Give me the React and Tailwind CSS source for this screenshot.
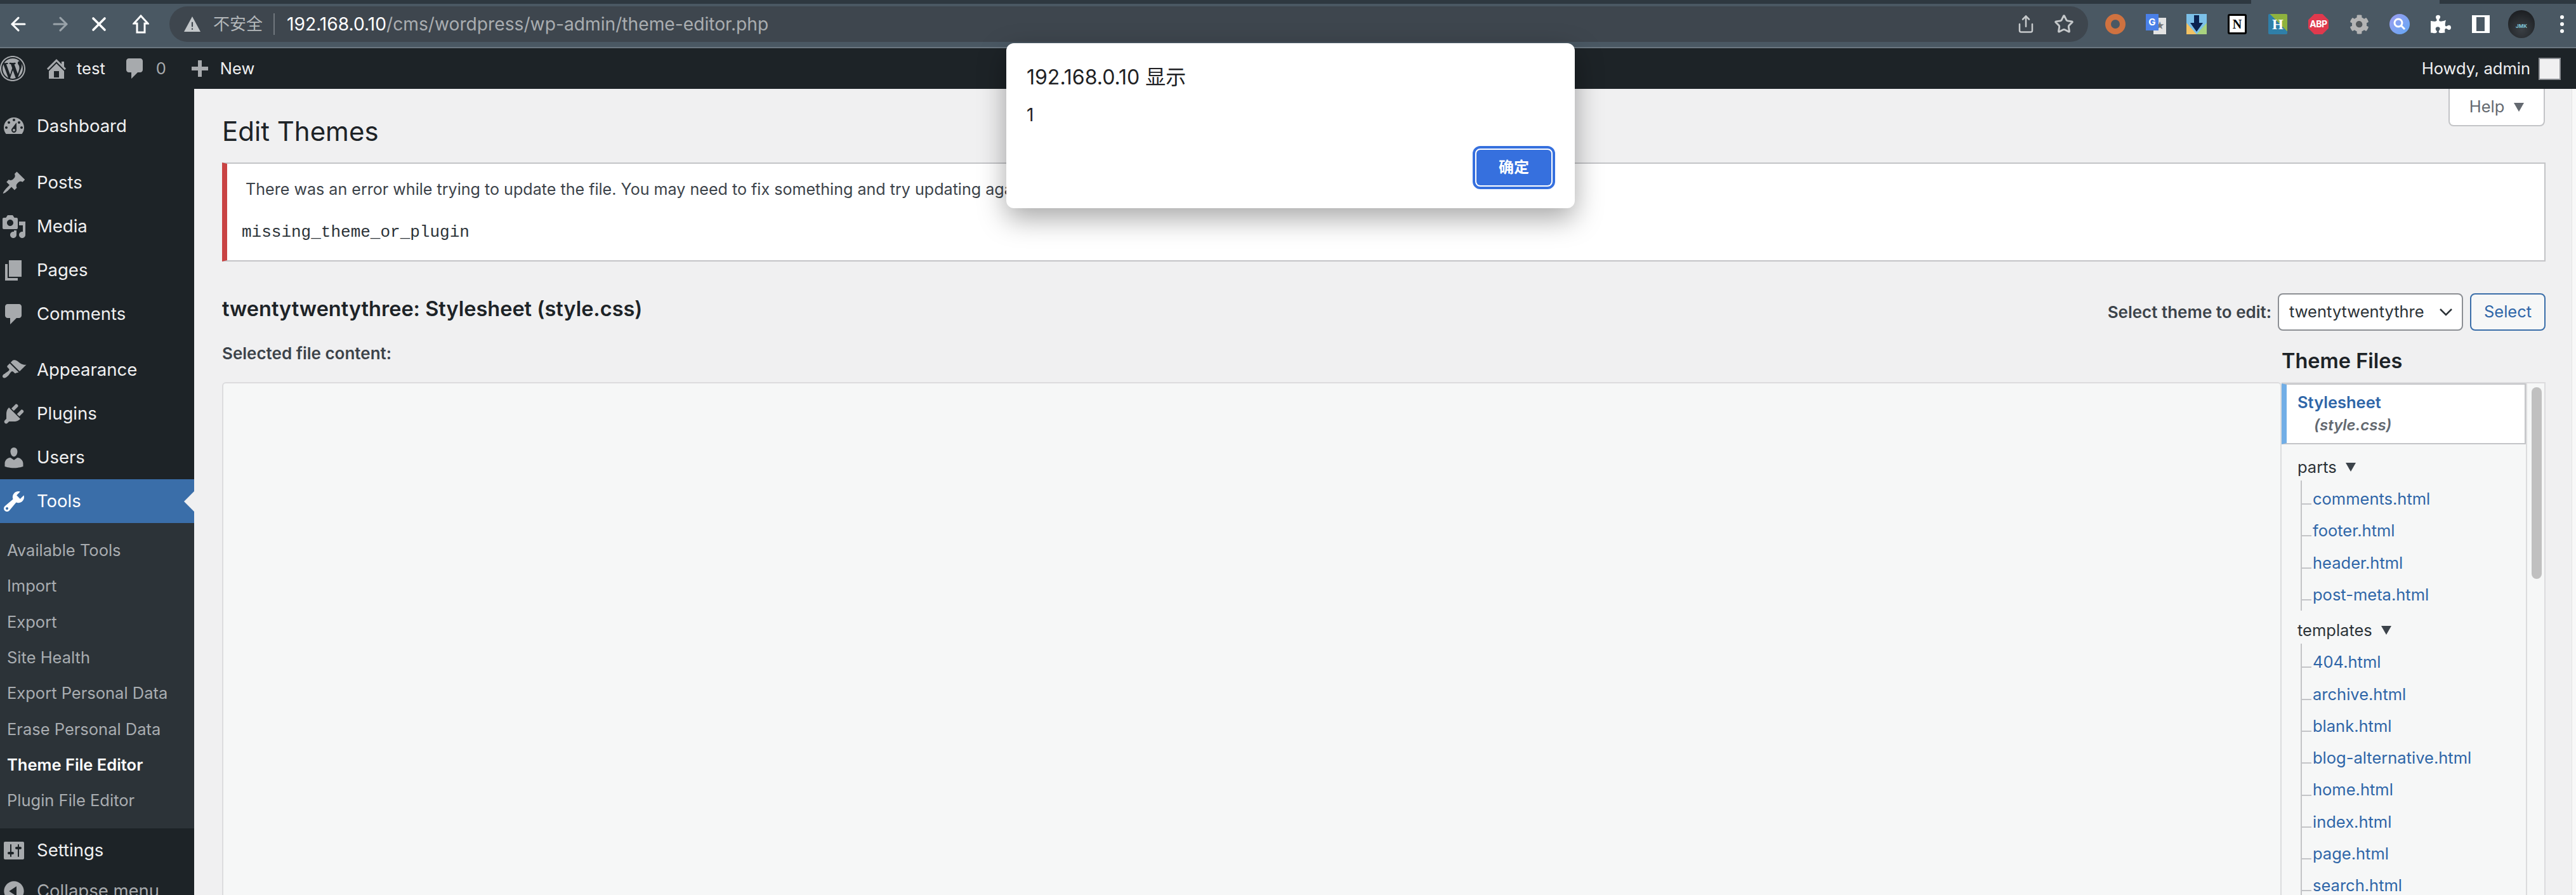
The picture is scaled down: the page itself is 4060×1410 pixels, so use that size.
import { ArrowLeft, ArrowRight, X, Share, Star } from 'lucide-react';
import { FaPuzzlePiece, FaCog } from 'react-icons/fa';

const dash = {
  wp: 'M20 10c0-5.52-4.48-10-10-10S0 4.48 0 10s4.48 10 10 10 10-4.48 10-10zM10 1.01c4.96 0 8.99 4.03 8.99 8.99s-4.03 8.99-8.99 8.99S1.01 14.96 1.01 10 5.04 1.01 10 1.01zM8.01 14.82L4.96 6.61c.49-.03 1.05-.08 1.05-.08.43-.05.38-1.01-.06-.99 0 0-1.29.1-2.13.1-.15 0-.33 0-.52-.01 1.44-2.17 3.9-3.6 6.7-3.6 2.09 0 3.99.79 5.41 2.09-.6-.08-1.45.35-1.45 1.42 0 .66.38 1.22.79 1.88.31.54.5 1.22.5 2.21 0 1.34-1.27 4.48-1.27 4.48l-2.71-7.5c.48-.03.75-.16.75-.16.43-.05.38-1.1-.05-1.08 0 0-1.3.11-2.14.11-.78 0-2.11-.11-2.11-.11-.43-.02-.48 1.06-.05 1.08l.84.08 1.12 3.04zm6.02 2.15L16.64 10s.67-1.69.39-3.81c.63 1.14.94 2.42.94 3.81 0 2.96-1.56 5.58-3.94 6.97zM2.68 6.77L6.5 17.25c-2.67-1.3-4.47-4.08-4.47-7.25 0-1.16.2-2.23.65-3.23zm7.45 4.53l2.29 6.25c-.75.27-1.57.42-2.42.42-.72 0-1.41-.11-2.06-.3z',
  home: 'M16 8.5l1.53 1.53-1.06 1.06L10 4.62l-6.47 6.47-1.06-1.06L10 2.5l4 4v-2h2v4zm-6-2.46l6 5.99V18H4v-5.97zM12 17v-5H8v5h4z',
  dashboard: 'M3.76 16h12.48c1.1-1.37 1.76-3.11 1.76-5 0-4.42-3.58-8-8-8s-8 3.58-8 8c0 1.89.66 3.63 1.76 5zM10 4c.55 0 1 .45 1 1s-.45 1-1 1-1-.45-1-1 .45-1 1-1zM6 6c.55 0 1 .45 1 1s-.45 1-1 1-1-.45-1-1 .45-1 1-1zm8 0c.55 0 1 .45 1 1s-.45 1-1 1-1-.45-1-1 .45-1 1-1zm-5.37 5.55L12 7v6c0 1.1-.9 2-2 2s-2-.9-2-2c0-.57.24-1.08.63-1.45zM4 10c.55 0 1 .45 1 1s-.45 1-1 1-1-.45-1-1 .45-1 1-1zm12 0c.55 0 1 .45 1 1s-.45 1-1 1-1-.45-1-1 .45-1 1-1zm-5 3c0-.55-.45-1-1-1s-1 .45-1 1 .45 1 1 1 1-.45 1-1z',
  posts: 'M10.44 3.02l1.82-1.82 6.36 6.35-1.83 1.82c-1.05-.68-2.48-.57-3.41.36l-.75.75c-.92.93-1.04 2.35-.35 3.41l-1.83 1.82-2.41-2.41-2.8 2.79c-.42.42-3.38 2.71-3.8 2.29s1.86-3.39 2.28-3.81l2.79-2.79L4.1 9.36l1.83-1.82c1.05.69 2.48.57 3.4-.36l.75-.75c.93-.92 1.05-2.35.36-3.41z',
  media: 'M13 11V4c0-.55-.45-1-1-1h-1.67L9 1H5L3.67 3H2c-.55 0-1 .45-1 1v7c0 .55.45 1 1 1h10c.55 0 1-.45 1-1zM7 4.5c1.38 0 2.5 1.12 2.5 2.5S8.38 9.5 7 9.5 4.5 8.38 4.5 7 5.62 4.5 7 4.5zM14 6h5v10.5c0 1.38-1.12 2.5-2.5 2.5S14 17.88 14 16.5s1.12-2.5 2.5-2.5c.17 0 .34.02.5.05V9h-3V6zm-4 8.05V13h2v3.5c0 1.38-1.12 2.5-2.5 2.5S7 17.88 7 16.5 8.12 14 9.5 14c.17 0 .34.02.5.05z',
  pages: 'M6 15V2h10v13H6zm-1 1h8v2H3V5h2v11z',
  comments: 'M5 2h9c1.1 0 2 .9 2 2v7c0 1.1-.9 2-2 2h-2l-5 5v-5H5c-1.1 0-2-.9-2-2V4c0-1.1.9-2 2-2z',
  appearance: 'M14.48 11.06L7.41 3.99l1.5-1.5c.5-.56 2.3-.47 3.51.32 1.21.8 1.43 1.28 2.91 2.1 1.18.64 2.45 1.26 4.45.85zm-.71.71L6.7 4.7 4.93 6.47c-.39.39-.39 1.02 0 1.41l1.06 1.06c.39.39.39 1.03 0 1.42-.6.6-1.43 1.11-2.21 1.69-.35.26-.7.53-1.01.84C1.43 13.23.4 14.84 1.4 15.84c.99 1 2.64-.04 3.98-1.38.31-.31.58-.66.84-1.01.58-.78 1.09-1.61 1.69-2.21.39-.39 1.02-.39 1.41 0l1.06 1.06c.39.39 1.02.39 1.41 0z',
  plugins: 'M13.11 4.36L9.87 7.6 8 5.73l3.24-3.24c.35-.34 1.05-.2 1.56.32.52.51.66 1.21.31 1.55zm-8 1.77l.91-1.12 9.01 9.01-1.19.84c-.71.71-2.63 1.16-3.82 1.16H6.14L4.9 17.26c-.59.59-1.54.59-2.12 0-.59-.58-.59-1.53 0-2.12l1.24-1.24v-3.88c0-1.13.4-3.19 1.09-3.89zm7.26 3.97l3.24-3.24c.34-.35 1.04-.21 1.55.31.52.51.66 1.21.31 1.55l-3.24 3.25z',
  users: 'M10 9.25c-2.27 0-2.73-3.44-2.73-3.44C7 4.02 7.82 2 9.97 2c2.16 0 2.98 2.02 2.71 3.81 0 0-.41 3.44-2.68 3.44zm0 2.57L12.72 10c2.39 0 4.52 2.33 4.52 4.53v2.49s-3.65 1.13-7.24 1.13c-3.65 0-7.24-1.13-7.24-1.13v-2.49c0-2.25 1.94-4.48 4.47-4.48z',
  tools: 'M16.68 9.77c-1.34 1.34-3.3 1.67-4.95.99l-5.41 6.52c-.99.99-2.59.99-3.58 0s-.99-2.59 0-3.57l6.52-5.42c-.68-1.65-.35-3.61.99-4.95 1.28-1.28 3.12-1.62 4.72-1.06l-2.89 2.89 2.82 2.82 2.86-2.87c.53 1.58.18 3.39-1.08 4.65zM3.81 16.21c.4.39 1.04.39 1.43 0 .4-.4.4-1.04 0-1.43-.39-.4-1.03-.4-1.43 0-.39.39-.39 1.03 0 1.43z',
  settings: 'M18 16V4c0-.55-.45-1-1-1H3c-.55 0-1 .45-1 1v12c0 .55.45 1 1 1h14c.55 0 1-.45 1-1zM8 11h1c.55 0 1 .45 1 1s-.45 1-1 1H8v1.5c0 .28-.22.5-.5.5s-.5-.22-.5-.5V13H6c-.55 0-1-.45-1-1s.45-1 1-1h1V5.5c0-.28.22-.5.5-.5s.5.22.5.5V11zm5-2h-1c-.55 0-1-.45-1-1s.45-1 1-1h1V5.5c0-.28.22-.5.5-.5s.5.22.5.5V7h1c.55 0 1 .45 1 1s-.45 1-1 1h-1v5.5c0 .28-.22.5-.5.5s-.5-.22-.5-.5V9z',
  collapse: 'M10 2.16c4.33 0 7.84 3.51 7.84 7.84s-3.51 7.84-7.84 7.84S2.16 14.33 2.16 10 5.71 2.16 10 2.16zm2 11.72V6.12L6.18 9.97z',
};

function Dash({ name, className }) {
  return (
    <svg viewBox="0 0 20 20" fill="currentColor" className={className}>
      <path d={dash[name]} />
    </svg>
  );
}

function Caret({ className }) {
  return (
    <svg viewBox="0 0 16 16" fill="currentColor" className={className}>
      <path d="M0 1h16L8 15z" />
    </svg>
  );
}

function ExtensionIcons() {
  return (
    <div className="flex items-center gap-[32px] ml-[27px]">
      {/* orange ring */}
      <div className="w-[32px] h-[32px] rounded-full border-[9px] border-[#cf7240]" />
      {/* translate */}
      <div className="w-[32px] h-[32px] relative">
        <div className="absolute right-0 bottom-0 w-[20px] h-[26px] bg-[#e3e3e3] text-[#777] text-[15px] leading-[26px] text-center">★</div>
        <div className="absolute left-0 top-0 w-[20px] h-[26px] bg-[#4a80e8] text-white text-[15px] font-bold leading-[26px] text-center">G</div>
      </div>
      {/* download */}
      <svg viewBox="0 0 32 32" className="w-[32px] h-[32px]">
        <rect width="32" height="32" fill="#7cc0e8" />
        <path d="M0 14L16 32H0z" fill="#f2c263" />
        <path d="M32 14L16 32h16z" fill="#a8d27f" />
        <path d="M12 2h8v12h6L16 28 6 14h6z" fill="#0c2350" />
      </svg>
      {/* notion */}
      <div className="w-[32px] flex justify-center">
        <div className="w-[30px] h-[32px] bg-white border-[3px] border-black rounded-[3px] flex items-center justify-center font-['Liberation_Serif'] font-bold text-[20px] text-black leading-none">N</div>
      </div>
      {/* H */}
      <div className="w-[32px] flex justify-center">
        <div className="w-[30px] h-[32px] rounded-[2px] bg-[linear-gradient(45deg,#2f7fa8_55%,#8fb23e_55%)] flex items-center justify-center font-['Liberation_Serif'] font-bold text-[23px] text-white leading-none">H</div>
      </div>
      {/* ABP */}
      <div className="w-[32px] h-[32px] bg-[#e0394d] [clip-path:polygon(30%_0,70%_0,100%_30%,100%_70%,70%_100%,30%_100%,0_70%,0_30%)] flex items-center justify-center text-white font-bold text-[14px] tracking-[-0.5px] leading-none">ABP</div>
      {/* gear */}
      <div className="relative w-[32px] h-[32px] flex items-center justify-center">
        <FaCog className="w-[31px] h-[31px] text-[#b4b4b4]" />
        <div className="absolute w-[10px] h-[10px] rounded-full bg-[#55595c]" />
      </div>
      {/* blue search */}
      <svg viewBox="0 0 32 32" className="w-[32px] h-[32px]">
        <defs>
          <linearGradient id="q" x1="0" y1="0" x2="1" y2="1">
            <stop offset="0" stopColor="#9d9df0" />
            <stop offset="1" stopColor="#63a8f5" />
          </linearGradient>
        </defs>
        <circle cx="16" cy="16" r="16" fill="url(#q)" />
        <circle cx="14" cy="14" r="6" fill="none" stroke="#fff" strokeWidth="3" />
        <path d="M18 18l6 6" stroke="#fff" strokeWidth="3" />
      </svg>
    </div>
  );
}

function BrowserBar() {
  return (
    <div className="h-[76px] shrink-0 bg-[#4a5863] border-b-2 border-[#6a7680]">
      <div className="h-[6px] flex">
        <div className="w-[3548px] bg-[#2e3840]" />
        <div className="w-[297px]" />
        <div className="flex-1 bg-[#2e3840]" />
      </div>
      <div className="flex items-start">
        <div className="h-[56px] mt-[4px] flex items-center w-[267px] shrink-0 text-white">
          <ArrowLeft className="w-[34px] h-[34px] ml-[12px]" strokeWidth={2.2} />
          <ArrowRight className="w-[34px] h-[34px] ml-[32px] text-[#9aa3aa]" strokeWidth={2.2} />
          <X className="w-[36px] h-[36px] ml-[26px]" strokeWidth={2.4} />
          <svg viewBox="0 0 26 30" fill="none" stroke="currentColor" strokeWidth="3" className="w-[26px] h-[30px] ml-[35px]">
            <path d="M13 2L2 14h5v14h12V14h5z" />
          </svg>
        </div>
        <div className="h-[56px] mt-[4px] w-[3024px] rounded-[28px] bg-[#3e464e] flex items-center">
          <svg viewBox="0 0 24 24" className="w-[26px] h-[26px] ml-[23px]" fill="#c3c7ca">
            <path d="M12 1L24 23H0z" />
            <path d="M11 9h2v7h-2zM11 18h2v2h-2z" fill="#3e464e" />
          </svg>
          <span className="ml-[20px] text-[26px] leading-none text-[#b4b8bb]">不安全</span>
          <span className="ml-[17px] w-[2px] h-[34px] bg-[#70777d]" />
          <span className="ml-[19px] text-[28.2px] leading-none text-[#a9adb0] whitespace-nowrap">
            <span className="text-white">192.168.0.10</span>/cms/wordpress/wp-admin/theme-editor.php
          </span>
          <Share className="w-[30px] h-[32px] ml-auto text-[#c6c9cb]" strokeWidth={2} />
          <Star className="w-[32px] h-[32px] ml-[29px] mr-[22px] text-[#c6c9cb]" strokeWidth={2.2} />
        </div>
        <div className="h-[56px] mt-[4px] flex items-center flex-1">
          <ExtensionIcons />
          <FaPuzzlePiece className="w-[32px] h-[32px] ml-[33px] text-white" />
          <div className="w-[28px] h-[28px] ml-[33px] border-y-[3px] border-l-[7px] border-r-[8px] border-white" />
          <div className="w-[42px] h-[44px] ml-[29px] rounded-full bg-[radial-gradient(circle_at_50%_70%,#3a3f44,#15171a)] flex items-center justify-center pt-[6px] text-[8px] font-bold leading-none text-[#7fc4d8]">JMK</div>
          <div className="ml-[40px] flex flex-col gap-[5px]">
            <span className="w-[6px] h-[6px] rounded-full bg-white" />
            <span className="w-[6px] h-[6px] rounded-full bg-white" />
            <span className="w-[6px] h-[6px] rounded-full bg-white" />
          </div>
        </div>
      </div>
    </div>
  );
}

function AdminBar() {
  return (
    <div className="h-[64px] shrink-0 bg-[#1d2327] flex items-center text-[25.5px] text-[#f0f0f1] pr-[24px]">
      <Dash name="wp" className="w-[40px] h-[40px] text-[#a7aaad]" />
      <Dash name="home" className="w-[40px] h-[40px] ml-[29px] text-[#a7aaad]" />
      <span className="ml-[12px]">test</span>
      <Dash name="comments" className="w-[40px] h-[40px] ml-[27px] text-[#a7aaad]" />
      <span className="ml-[13px] text-[#a7aaad]">0</span>
      <svg viewBox="0 0 26 26" fill="#a7aaad" className="w-[26px] h-[26px] ml-[40px]">
        <path d="M10 0h6v10h10v6H16v10h-6V16H0v-6h10z" />
      </svg>
      <span className="ml-[19px]">New</span>
      <span className="ml-auto">Howdy, admin</span>
      <div className="ml-[13px] w-[35px] h-[35px] bg-[#f0f0f1] border-2 border-[#8c8f94]" />
    </div>
  );
}

const topMenu = [
  { name: 'dashboard', label: 'Dashboard', cls: 'mb-[20px]' },
  { name: 'posts', label: 'Posts' },
  { name: 'media', label: 'Media' },
  { name: 'pages', label: 'Pages' },
  { name: 'comments', label: 'Comments', cls: 'mb-[19px]' },
  { name: 'appearance', label: 'Appearance' },
  { name: 'plugins', label: 'Plugins' },
  { name: 'users', label: 'Users' },
];

const subMenu = ['Available Tools', 'Import', 'Export', 'Site Health', 'Export Personal Data', 'Erase Personal Data', 'Theme File Editor', 'Plugin File Editor'];

function MenuItem({ name, label, cls = '' }) {
  return (
    <div className={`h-[69px] flex items-center text-[27.5px] text-[#f0f0f1] ${cls}`}>
      <Dash name={name} className="w-[40px] h-[40px] ml-[2px] text-[#a7aaad]" />
      <span className="ml-[16px]">{label}</span>
    </div>
  );
}

function Sidebar() {
  return (
    <aside className="w-[306px] shrink-0 bg-[#1d2327] pt-[24px] overflow-hidden">
      {topMenu.map((item) => (
        <MenuItem key={item.name} {...item} />
      ))}
      <div className="relative h-[69px] flex items-center text-[27.5px] text-white bg-[#3a6ea9]">
        <Dash name="tools" className="w-[40px] h-[40px] ml-[2px]" />
        <span className="ml-[16px]">Tools</span>
        <div className="absolute right-0 top-[19px] border-y-[16px] border-r-[16px] border-y-transparent border-r-[#f0f0f1]" />
      </div>
      <div className="bg-[#2c3338] pt-[15px] pb-[16px] h-[481px]">
        {subMenu.map((label) => (
          <div
            key={label}
            className={`h-[56.3px] pl-[11px] flex items-center text-[25.5px] ${label === 'Theme File Editor' ? 'font-semibold text-white' : 'text-[#a9adb1]'}`}
          >
            {label}
          </div>
        ))}
      </div>
      <MenuItem name="settings" label="Settings" />
      <div className="h-[60px] flex items-center text-[27.5px] text-[#a7aaad]">
        <Dash name="collapse" className="w-[40px] h-[40px] ml-[2px]" />
        <span className="ml-[16px]">Collapse menu</span>
      </div>
    </aside>
  );
}

const parts = ['comments.html', 'footer.html', 'header.html', 'post-meta.html'];
const templates = ['404.html', 'archive.html', 'blank.html', 'blog-alternative.html', 'home.html', 'index.html', 'page.html', 'search.html'];

function FileGroup({ title, files, cls }) {
  return (
    <div className={cls}>
      <div className="h-[34px] pl-[25px] flex items-center text-[25.5px] text-[#2c3338]">
        {title}
        <Caret className="w-[16px] h-[16px] ml-[14px] text-[#3c434a]" />
      </div>
      <ul className="ml-[30px] mt-[4px] pt-[4px] border-l-2 border-[#c3c4c7]">
        {files.map((f) => (
          <li key={f} className="h-[50.3px] flex items-center text-[25.5px] text-[#2f66a8]">
            <span className="w-[15px] h-[2px] mt-[16px] mr-[2px] bg-[#c3c4c7]" />
            {f}
          </li>
        ))}
      </ul>
    </div>
  );
}

function ThemeFiles() {
  return (
    <div className="w-[416px] shrink-0">
      <h2 className="h-[81px] pt-[32px] text-[32.5px] leading-[32px] font-semibold text-[#1d2327]">Theme Files</h2>
      <div className="flex border-t-2 border-r-2 border-[#dcdcde] bg-[#f6f7f7] h-[808px] overflow-hidden">
        <div className="w-[387px] shrink-0 border-r-2 border-[#dcdcde]">
          <div className="h-[96px] bg-white border-2 border-[#c3c4c7] border-l-[8px] border-l-[#72aee6] pl-[17px] flex flex-col justify-center">
            <div className="text-[25.5px] leading-[36px] font-semibold text-[#2f66a8]">Stylesheet</div>
            <div className="pl-[26px] text-[24px] leading-[36px] font-semibold italic text-[#646970]">(style.css)</div>
          </div>
          <FileGroup title="parts" files={parts} cls="mt-[19px]" />
          <FileGroup title="templates" files={templates} cls="mt-[14px]" />
        </div>
        <div className="flex-1 pt-[6px] pl-[7px]">
          <div className="w-[16px] h-[302px] rounded-full bg-[#c0c0c0]" />
        </div>
      </div>
    </div>
  );
}

function Content() {
  return (
    <main className="flex-1 min-w-0 bg-[#f0f0f1] pl-[44px] pr-[41px]">
      <div className="h-[116px] flex justify-between items-start">
        <h1 className="mt-[49px] text-[42px] leading-[36px] text-[#1d2327]">Edit Themes</h1>
        <div className="h-[59px] w-[152px] mr-[1px] bg-white border-2 border-t-0 border-[#c3c4c7] rounded-b-[8px] flex items-center justify-center text-[25.5px] text-[#646970]">
          Help
          <Caret className="w-[16px] h-[16px] ml-[15px]" />
        </div>
      </div>

      <div className="h-[156px] bg-white border-2 border-[#c3c4c7] border-l-[8px] border-l-[#c94343]">
        <p className="ml-[29px] mt-[24px] text-[25.1px] leading-[32px] text-[#3c434a] whitespace-nowrap">
          There was an error while trying to update the file. You may need to fix something and try updating again.
        </p>
        <pre className="ml-[23px] mt-[36px] font-['Liberation_Mono',monospace] text-[26px] leading-[32px] text-[#2c3338]">missing_theme_or_plugin</pre>
      </div>

      <div className="mt-[50px] flex justify-between items-start">
        <h2 className="h-[50px] text-[32.5px] leading-[50px] font-semibold text-[#1d2327]">twentytwentythree: Stylesheet (style.css)</h2>
        <div className="flex items-center h-[59px] text-[25.5px]">
          <span className="font-semibold text-[26px] text-[#3c434a]">Select theme to edit:</span>
          <div className="ml-[10px] w-[292px] h-[59px] bg-white border-2 border-[#8c8f94] rounded-[8px] flex items-center justify-between pl-[16px] pr-[15px] text-[#2c3338]">
            <span className="whitespace-nowrap">twentytwentythre</span>
            <svg viewBox="0 0 20 12" fill="none" stroke="currentColor" strokeWidth="2.5" className="w-[20px] h-[12px]">
              <path d="M1 1l9 9 9-9" />
            </svg>
          </div>
          <div className="ml-[11px] w-[119px] h-[59px] bg-[#f6f7f7] border-2 border-[#3a6ea9] rounded-[8px] flex items-center justify-center text-[#2f66a8]">Select</div>
        </div>
      </div>

      <div className="flex">
        <div className="flex-1 min-w-0">
          <div className="h-[81px] pt-[24px] text-[26px] leading-[24px] font-semibold text-[#3c434a]">Selected file content:</div>
          <div className="h-[808px] bg-[#f6f7f7] border-2 border-b-0 border-[#dcdcde] rounded-t-[6px]" />
        </div>
        <ThemeFiles />
      </div>
    </main>
  );
}

function AlertDialog() {
  return (
    <div className="absolute left-[1586px] top-[68px] w-[896px] h-[260px] bg-white rounded-[12px] shadow-[0_16px_44px_rgba(0,0,0,0.35)] pt-[36px] pl-[32px] pr-[31px]">
      <div className="text-[32px] leading-[36px] text-[#202124]">192.168.0.10 显示</div>
      <div className="mt-[23px] text-[28px] leading-[36px] text-[#202124]">1</div>
      <div className="flex justify-end mt-[31px]">
        <div className="w-[130px] h-[68px] rounded-[12px] border-[4px] border-[#3670de] bg-white p-[2px]">
          <div className="w-full h-full rounded-[6px] bg-[#3670de] flex items-center justify-center text-white font-bold text-[24px] leading-none">确定</div>
        </div>
      </div>
    </div>
  );
}

export default function App() {
  return (
    <div className={'relative w-[4060px] h-[1410px] overflow-hidden flex flex-col font-[Inter,"Noto_Sans_CJK_SC",sans-serif]'}>
      <BrowserBar />
      <AdminBar />
      <div className="flex-1 min-h-0 flex">
        <Sidebar />
        <Content />
        <div className="w-[7px] shrink-0 bg-[#f8f8f8] border-l border-[#e4e4e4]" />
      </div>
      <AlertDialog />
    </div>
  );
}
